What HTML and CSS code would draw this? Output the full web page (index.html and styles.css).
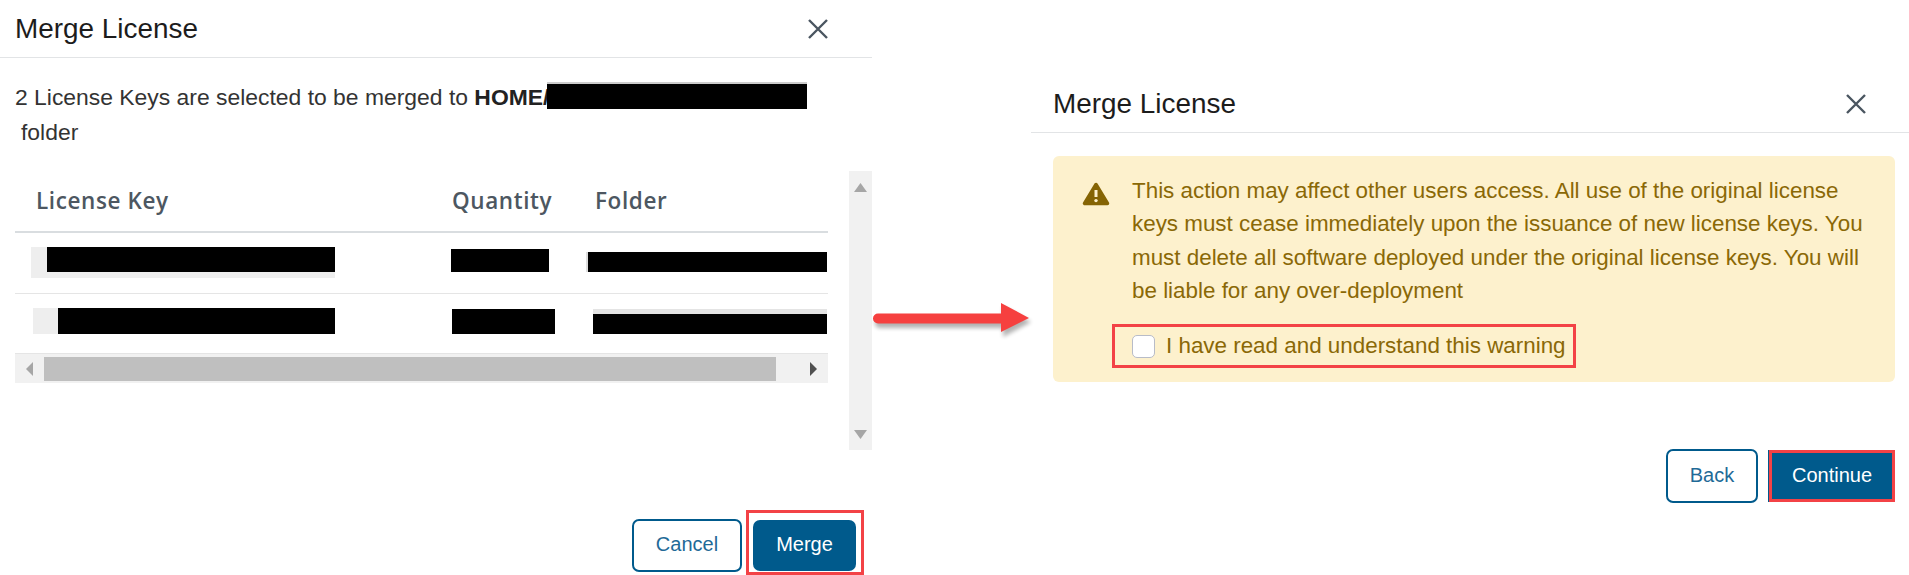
FILE: index.html
```html
<!DOCTYPE html>
<html lang="en">
<head>
<meta charset="utf-8">
<title>Merge License</title>
<link rel="stylesheet" href="styles.css">
</head>
<body>
<main class="page">
  <section class="panel panel-merge">
    <header class="head">
      <h2 class="title">Merge License</h2>
      <svg class="close" viewBox="0 0 20 20" aria-label="Close"><path d="M1 1 19 19M19 1 1 19"/></svg>
    </header>
    <p class="message">2 License Keys are selected to be merged to <b>HOME/</b><span class="redact-path"></span><br><span class="folder-word">folder</span></p>
    <div class="scroll-area">
      <div class="table">
        <div class="row row-head">
          <div class="th">License Key</div>
          <div class="th">Quantity</div>
          <div class="th">Folder</div>
        </div>
        <div class="row row-one">
          <div><div class="redact r1-key"></div></div>
          <div><div class="redact r1-qty"></div></div>
          <div><div class="redact r1-folder"></div></div>
        </div>
        <div class="row row-two">
          <div><div class="redact r2-key"></div></div>
          <div><div class="redact r2-qty"></div></div>
          <div><div class="redact r2-folder"></div></div>
        </div>
        <div class="hscroll">
          <div class="hbtn"><svg class="arrow-h" viewBox="0 0 7 14"><path class="tri-light" d="M7 0V14L0 7Z"/></svg></div>
          <div class="hthumb"></div>
          <div class="hrest"><svg class="arrow-h" viewBox="0 0 7 14"><path class="tri-dark" d="M0 0V14L7 7Z"/></svg></div>
        </div>
      </div>
      <div class="vscroll">
        <svg class="arrow-v" viewBox="0 0 13 9"><path class="tri-light" d="M0 9H13L6.500 0Z"/></svg>
        <svg class="arrow-v" viewBox="0 0 13 9"><path class="tri-light" d="M0 0H13L6.500 9Z"/></svg>
      </div>
    </div>
    <div class="actions actions-merge">
      <button class="btn btn-outline btn-cancel">Cancel</button>
      <div class="mark-box"><button class="btn btn-solid btn-merge">Merge</button></div>
    </div>
  </section>

  <section class="panel panel-warn">
    <header class="head">
      <h2 class="title">Merge License</h2>
      <svg class="close" viewBox="0 0 20 20" aria-label="Close"><path d="M1 1 19 19M19 1 1 19"/></svg>
    </header>
    <div class="alert">
      <svg class="warn-icon" viewBox="0 0 28 24"><path class="warn-tri" d="M14 2.500 2.500 21.500H25.500Z"/><path class="warn-mark" d="M14 8V15"/><circle class="warn-dot" cx="14" cy="18.600" r="1.700"/></svg>
      <div class="alert-body">
        <p class="alert-text">This action may affect other users access. All use of the original license keys must cease immediately upon the issuance of new license keys. You must delete all software deployed under the original license keys. You will be liable for any over-deployment</p>
        <label class="ack"><input class="ack-box" type="checkbox"><span>I have read and understand this warning</span></label>
      </div>
    </div>
    <div class="actions actions-warn">
      <button class="btn btn-outline btn-back">Back</button>
      <button class="btn btn-solid btn-continue">Continue</button>
    </div>
  </section>

  <svg class="flow-arrow" viewBox="0 0 170 44" aria-hidden="true">
    <path class="flow-shadow" d="M7 15.500H130V5L158 20 130 35V26H7A5 5 0 0 1 7 15.500Z"/>
    <path class="flow-fill" d="M5 11.500H128V1L156 16 128 30V21.500H5A5 5 0 0 1 5 11.500Z"/>
  </svg>
</main>
</body>
</html>
```
FILE: styles.css
```css
* { box-sizing: border-box; }
html, body { margin: 0; height: 100%; background: #fff; }
body { overflow: hidden; font-family: "Liberation Sans", Arial, sans-serif; }

.page { position: relative; display: flex; width: 1909px; height: 575px; }
.panel { display: flex; flex-direction: column; }
.panel-merge { width: 872px; height: 575px; }
.panel-warn { width: 878px; margin-left: 159px; padding-top: 75px; }

.head {
  display: flex; align-items: center; justify-content: space-between;
  height: 58px; padding: 0 44px 0 15px;
  border-bottom: 1px solid #e2e4e6;
}
.panel-warn .head { padding: 0 43px 0 22px; }
.title { margin: 0; font-size: 27.900px; font-weight: 400; color: #1c1c1c; }
.close { width: 20px; height: 20px; }
.close path { fill: none; stroke: #4a5560; stroke-width: 2.400; }

.message { margin: 0 0 21px; padding: 22px 0 0 15px; font-size: 22.900px; line-height: 35px; color: #333; white-space: nowrap; }
.message b { color: #222; }
.redact-path {
  display: inline-block; width: 260px; height: 25px; vertical-align: -4px;
  margin-left: -2px; background: #000; box-shadow: 0 -2px 0 #ccc;
}
.folder-word { margin-left: 6px; }

.scroll-area { display: flex; align-items: flex-start; padding-left: 15px; }
.table { width: 813px; }
.row { display: grid; grid-template-columns: 437px 138px 1fr; overflow: hidden; }
.row-head { height: 62px; border-bottom: 2px solid #d9dde0; }
.th { padding: 19px 0 0 21px; font-family: "Open Sans", sans-serif; font-size: 22.500px; font-weight: 600; line-height: 22px; color: #4d5761; letter-spacing: .6px; }
.th + .th { padding-left: 0; }
.th:last-child { padding-left: 5px; }
.row-one { height: 61px; border-bottom: 1px solid #e5e5e5; }
.row-two { height: 59px; }
.redact { background: #000; }
.r1-key { width: 288px; height: 25px; margin: 14px 0 0 32px; box-shadow: -16px 0 0 #eee, 0 6px 0 #eee, -16px 6px 0 #eee; }
.r1-qty { width: 98px; height: 23px; margin: 16px 0 0 -1px; }
.r1-folder { width: 239px; height: 20px; margin: 19px 0 0 -2px; box-shadow: -2px 0 0 #ddd; }
.r2-key { width: 277px; height: 26px; margin: 14px 0 0 43px; box-shadow: -25px 0 0 #eee; }
.r2-qty { width: 103px; height: 25px; margin: 15px 0 0 0; }
.r2-folder { width: 234px; height: 20px; margin: 20px 0 0 3px; box-shadow: 0 -5px 0 #e4e4e4; }

.hscroll { display: flex; height: 30px; padding-top: 3px; padding-bottom: 2px; background: #f1f1f1; border-top: 1px solid #e5e5e5; }
.hbtn { display: flex; align-items: center; width: 29px; padding-left: 11px; }
.hthumb { width: 732px; background: #bfbfbf; }
.hrest { flex: 1; display: flex; align-items: center; justify-content: flex-end; padding-right: 11px; }
.arrow-h { width: 7px; height: 14px; }
.vscroll {
  display: flex; flex-direction: column; align-items: center; justify-content: space-between;
  width: 23px; height: 279px; margin-left: 21px; padding: 12px 0 11px;
  background: #f1f1f1;
}
.arrow-v { width: 13px; height: 9px; }
.tri-light { fill: #a6a6a6; }
.tri-dark { fill: #505050; }

.actions { display: flex; justify-content: flex-end; }
.actions-merge { align-items: flex-end; margin-top: auto; padding-right: 8px; gap: 4px; }
.actions-warn { align-items: center; margin-top: 67px; padding-right: 14px; gap: 11px; }

.btn { margin: 0; font-family: "Liberation Sans", Arial, sans-serif; font-size: 20px; border-radius: 7px; padding: 0 0 2px; }
.btn-outline { background: #fff; color: #1f6a97; border: 2px solid #005a8c; }
.btn-solid { background: #005a8c; color: #fff; border: 0; }
.btn-cancel { width: 110px; height: 53px; margin-bottom: 3px; }
.btn-back { width: 92px; height: 54px; }
.mark-box { display: flex; align-items: flex-end; width: 118px; height: 65px; padding: 0 0 1px 4px; border: 3px solid #f34246; }
.btn-merge { width: 103px; height: 51px; }
.btn-continue { width: 126px; height: 52px; border: 3px solid #f34246; border-radius: 0; box-shadow: -1px 0 0 #005a8c; }

.alert {
  display: flex; height: 226px; margin: 23px 14px 0 22px;
  padding: 18px 25px 0 29px; background: #fdf1cd; border-radius: 6px; color: #8a6806;
}
.warn-icon { flex: none; width: 28px; height: 24px; margin: 8px 22px 0 0; }
.warn-tri { fill: #856404; stroke: #856404; stroke-width: 3.500; stroke-linejoin: round; }
.warn-mark { stroke: #fdf1cd; stroke-width: 3; fill: none; }
.warn-dot { fill: #fdf1cd; }
.alert-text { margin: 0; font-size: 22.400px; line-height: 33.300px; }
.ack {
  display: inline-flex; align-items: center; gap: 11px; width: 464px; height: 44px;
  margin: 17px 0 0 -20px; padding-left: 17px; border: 3px solid #f34246;
  font-size: 22.400px; color: #8a6806;
}
.ack-box { appearance: none; flex: none; width: 23px; height: 23px; margin: 0; background: #fff; border: 1px solid #b8bcc8; border-radius: 5px; }

.flow-arrow { position: absolute; left: 873px; top: 302px; width: 170px; height: 44px; overflow: visible; }
.flow-fill { fill: #f6403f; }
.flow-shadow { fill: #000; opacity: .3; filter: blur(2px); }
```
